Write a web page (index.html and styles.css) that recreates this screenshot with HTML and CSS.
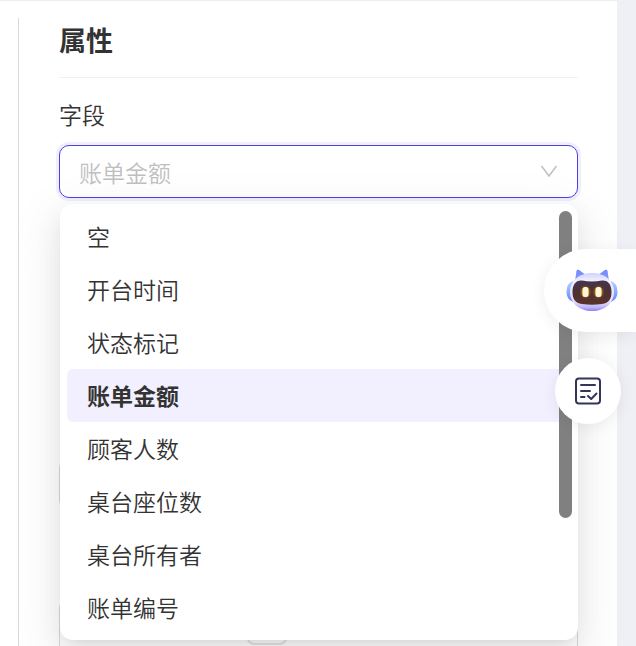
FILE: index.html
```html
<!DOCTYPE html>
<html lang="zh-CN">
<head>
<meta charset="utf-8">
<meta name="viewport" content="width=device-width, initial-scale=1">
<title>属性</title>
<link rel="stylesheet" href="styles.css">
</head>
<body>
<div class="page">
  <main class="sheet">
    <section class="panel">
      <h2 class="panel-title">属性</h2>
      <label class="label" for="field">字段</label>
      <div class="field">
        <select class="select" id="field">
          <option>账单金额</option>
        </select>
        <svg class="chevron" viewBox="0 0 18 14" aria-hidden="true"><path d="M1.500 1 9 11l7.500-10"/></svg>
        <div class="dropdown">
          <ul class="options" role="listbox" aria-label="字段">
            <li class="option" role="option">空</li>
            <li class="option" role="option">开台时间</li>
            <li class="option" role="option">状态标记</li>
            <li class="option selected" role="option" aria-selected="true">账单金额</li>
            <li class="option" role="option">顾客人数</li>
            <li class="option" role="option">桌台座位数</li>
            <li class="option" role="option">桌台所有者</li>
            <li class="option" role="option">账单编号</li>
          </ul>
          <div class="scroll-thumb"></div>
        </div>
      </div>
      <div class="covered-input"></div>
      <div class="covered-card"><span class="covered-tag"></span></div>
    </section>
  </main>
</div>
<button class="assistant" type="button" aria-label="智能助手">
  <svg viewBox="0 0 52 44" aria-hidden="true">
    <defs>
      <linearGradient id="shell" x1="0" y1="0" x2="0" y2="1">
        <stop offset="0" stop-color="#cdd2ff"/><stop offset=".2" stop-color="#f1efff"/>
        <stop offset=".75" stop-color="#e6defe"/><stop offset=".9" stop-color="#c0b6fb"/><stop offset="1" stop-color="#8d80f2"/>
      </linearGradient>
      <linearGradient id="ear" x1="0" y1="0" x2="0" y2="1">
        <stop offset="0" stop-color="#6f86f8"/><stop offset="1" stop-color="#8fa2ff"/>
      </linearGradient>
      <linearGradient id="side" x1="0" y1="0" x2="0" y2="1">
        <stop offset="0" stop-color="#b4d2ff"/><stop offset=".6" stop-color="#83a4ff"/><stop offset="1" stop-color="#6e7bff"/>
      </linearGradient>
      <linearGradient id="face" x1="0" y1="0" x2="0" y2="1">
        <stop offset="0" stop-color="#46354f"/><stop offset=".5" stop-color="#4c3035"/><stop offset="1" stop-color="#5c3326"/>
      </linearGradient>
      <radialGradient id="glow">
        <stop offset="0" stop-color="#ffb020"/><stop offset=".5" stop-color="#b96c08"/><stop offset="1" stop-color="#70400f" stop-opacity="0"/>
      </radialGradient>
    </defs>
    <path d="M9 12 10.500 2Q11 0 13 1l7 5zM43 12l-1.500-10Q41 0 39 1l-7 5z" fill="url(#ear)"/>
    <path d="M7 12Q1 14 .500 22T7 33zM45 12q6 2 6.500 10T45 33z" fill="url(#side)"/>
    <path d="M26 4C39 4 48 12 48 23S39 42 26 42 4 34 4 23 13 4 26 4z" fill="url(#shell)"/>
    <path d="M16 11.500Q26 13.500 36 11.500C42.500 11 45.500 16 45.500 23S43 34 36 35Q26 36.500 16 35C9 34 6.500 30 6.500 23S9.500 11 16 11.500z" fill="url(#face)"/>
    <ellipse cx="19.500" cy="23" rx="6.500" ry="7.500" fill="url(#glow)"/>
    <ellipse cx="32.500" cy="23" rx="6.500" ry="7.500" fill="url(#glow)"/>
    <rect x="16.500" y="18" width="6" height="10" rx="2.500" fill="#fff8d8"/>
    <rect x="29.500" y="18" width="6" height="10" rx="2.500" fill="#fff8d8"/>
  </svg>
</button>
<button class="survey" type="button" aria-label="问卷">
  <svg viewBox="0 0 26 28" aria-hidden="true"><rect x="1" y="1.500" width="24" height="25" rx="3"/><path d="M6 8h14M6 14h9M6 20h3.500M13 19l3.200 3L21.500 16.500"/></svg>
</button>
</body>
</html>
```
FILE: styles.css
```css
* { box-sizing: border-box; }

body {
  margin: 0;
  overflow: hidden;
  background: #eff0f6;
  color: #333;
  font-family: "Noto Sans CJK SC", sans-serif;
  font-size: 23px;
  font-weight: 350;
  line-height: 32px;
}

.page {
  height: 100vh;
  padding-right: 19px;
}

.sheet {
  height: 100%;
  padding: 17px 0 0 18px;
  border-top: 1px solid #eee;
  background: #fff;
}

.panel {
  min-height: 100%;
  padding: 0 39px 0 40px;
  border-left: 1px solid #d9d9d9;
}

.panel-title {
  margin: 0;
  padding: 2px 0 17px;
  border-bottom: 1px solid #f0f0f0;
  font-size: 27px;
  line-height: 40px;
  font-weight: 700;
}

.label {
  display: block;
  padding: 20px 0 15px;
}

.field { position: relative; }

.select {
  display: block;
  width: 100%;
  height: 53px;
  padding: 0 48px 0 19px;
  border: 1px solid #4a40e0;
  border-radius: 10px;
  outline: 0;
  background: #fff;
  box-shadow: 0 0 0 3px #f0eeff;
  color: #bfbfbf;
  font: inherit;
  appearance: none;
}

.chevron {
  position: absolute;
  top: 20px;
  right: 20px;
  width: 18px;
  height: 14px;
  fill: none;
  stroke: #bfbfbf;
  stroke-width: 1.5;
}

.dropdown {
  position: absolute;
  z-index: 1;
  top: 59px;
  left: 1px;
  right: 0;
  padding: 6px 7px;
  border-radius: 13px;
  background: #fff;
  box-shadow: 0 10px 26px rgba(0, 0, 0, .08), 0 5px 10px -7px rgba(0, 0, 0, .12), 0 15px 46px 13px rgba(0, 0, 0, .05);
}

.options {
  margin: 0;
  padding: 0;
  list-style: none;
}

.option {
  padding: 10px 20px 11px;
  border-radius: 6px;
}

.selected {
  background: #f2f0ff;
  font-weight: 700;
}

.scroll-thumb {
  position: absolute;
  top: 7px;
  right: 6px;
  width: 13px;
  height: 307px;
  border-radius: 7px;
  background: #808080;
}

.covered-input {
  height: 52px;
  margin-top: 260px;
  border: 1px solid #d9d9d9;
  border-radius: 10px;
}

.covered-card {
  height: 60px;
  margin-top: 88px;
  border: 1px solid #d9d9d9;
  border-radius: 10px;
}

.covered-tag {
  display: block;
  width: 40px;
  height: 46px;
  margin-left: 187px;
  border: 2px solid #e4e4e4;
  border-radius: 7px;
}

.assistant,
.survey {
  position: fixed;
  z-index: 2;
  display: flex;
  align-items: center;
  border: 0;
  background: #fff;
  box-shadow: 0 3px 16px rgba(0, 0, 0, .07);
}

.assistant {
  top: 249px;
  right: 0;
  width: 92px;
  height: 83px;
  padding: 0 0 0 22px;
  border-radius: 42px 0 0 42px;
}

.assistant svg {
  width: 52px;
  height: 44px;
}

.survey {
  top: 358px;
  right: 15px;
  justify-content: center;
  width: 66px;
  height: 66px;
  padding: 0;
  border-radius: 50%;
}

.survey svg {
  width: 26px;
  height: 28px;
  fill: none;
  stroke: #34345c;
  stroke-width: 2;
  stroke-linecap: round;
  stroke-linejoin: round;
}
```
